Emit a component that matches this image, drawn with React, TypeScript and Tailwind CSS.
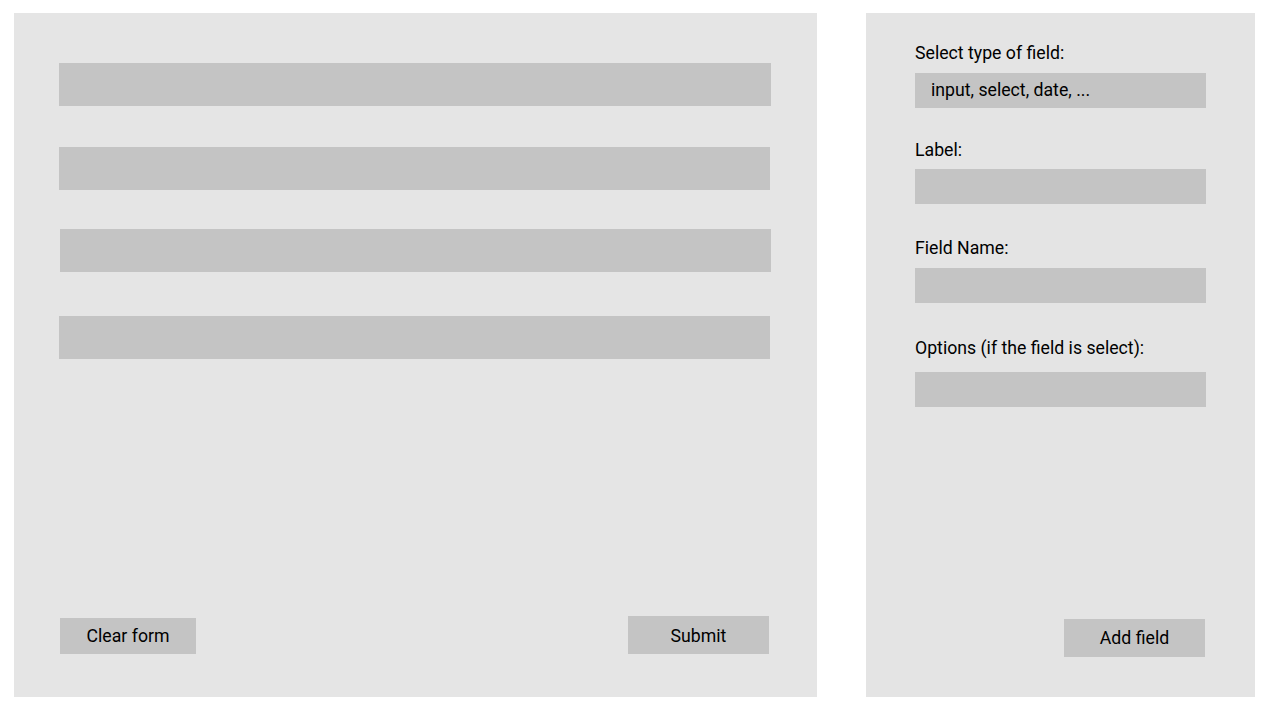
import React from 'react';

const fields = [
  { label: 'Select type of field:', placeholder: 'input, select, date, ...', gapTop: 'mt-0', gapBar: 'mt-[10px]' },
  { label: 'Label:', gapTop: 'mt-[32px]', gapBar: 'mt-[9px]' },
  { label: 'Field Name:', gapTop: 'mt-[34px]', gapBar: 'mt-[10px]' },
  { label: 'Options (if the field is select):', gapTop: 'mt-[35px]', gapBar: 'mt-[14px]' },
];

export default function App() {
  return (
    <div className="flex h-[710px] w-[1277px] bg-white text-black" style={{ fontFamily: 'Roboto, "Noto Sans", sans-serif' }}>
      {/* form preview */}
      <div className="ml-[14px] mt-[13px] flex h-[684px] w-[803px] flex-col bg-[#e5e5e5]">
        <div className="ml-[45px] mt-[50px] h-[43px] w-[712px] bg-[#c4c4c4]" />
        <div className="ml-[45px] mt-[41px] h-[43px] w-[711px] bg-[#c4c4c4]" />
        <div className="ml-[46px] mt-[39px] h-[43px] w-[711px] bg-[#c4c4c4]" />
        <div className="ml-[45px] mt-[44px] h-[43px] w-[711px] bg-[#c4c4c4]" />

        <div className="mt-auto mb-[43px] flex items-end justify-between pl-[46px] pr-[48px]">
          <button className="flex h-[36px] w-[136px] items-center justify-center bg-[#c4c4c4] pt-[1px] text-[17.7px]">
            Clear form
          </button>
          <button className="flex h-[38px] w-[141px] items-center justify-center bg-[#c4c4c4] pt-[2px] text-[17.7px]">
            Submit
          </button>
        </div>
      </div>

      {/* field builder */}
      <div className="ml-[49px] mt-[13px] flex h-[684px] w-[389px] flex-col bg-[#e4e4e4] px-[49px] pt-[30px]">
        {fields.map((f) => (
          <div key={f.label} className={f.gapTop}>
            <div className="text-[17.7px] leading-[20px]">{f.label}</div>
            <div className={`${f.gapBar} flex h-[35px] w-[291px] items-center bg-[#c4c4c4] pl-[16px] text-[17.7px]`}>
              {f.placeholder}
            </div>
          </div>
        ))}

        <div className="mt-auto mb-[40px] flex justify-end pr-[1px]">
          <button className="flex h-[38px] w-[141px] items-center justify-center bg-[#c4c4c4] pt-[1px] text-[17.7px]">
            Add field
          </button>
        </div>
      </div>
    </div>
  );
}
